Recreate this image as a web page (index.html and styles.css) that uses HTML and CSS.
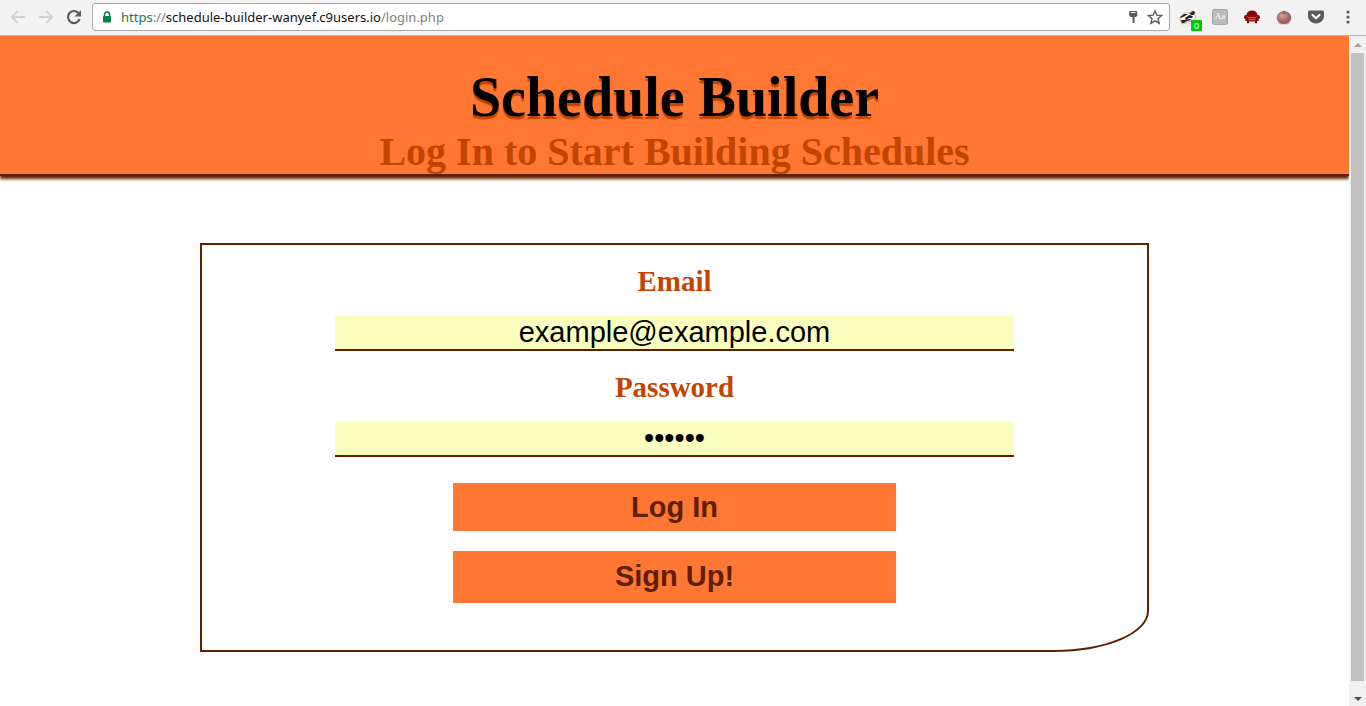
FILE: index.html
```html
<!DOCTYPE html>
<html lang="en">
<head>
<meta charset="utf-8">
<title>Schedule Builder</title>
<link rel="stylesheet" href="styles.css">
</head>
<body>
<div class="toolbar">
  <div class="nav">
    <button class="nav-btn" type="button" aria-label="Back"><svg width="16" height="16" viewBox="0 0 16 16"><path d="M15 8H2M8 2L2 8l6 6" fill="none" stroke="#d0d0d0" stroke-width="2"/></svg></button>
    <button class="nav-btn" type="button" aria-label="Forward"><svg width="16" height="16" viewBox="0 0 16 16"><path d="M1 8h13M8 2l6 6-6 6" fill="none" stroke="#d0d0d0" stroke-width="2"/></svg></button>
    <button class="nav-btn" type="button" aria-label="Reload"><svg width="16" height="16" viewBox="0 0 16 16"><path d="M13.6 10.2A6 6 0 1 1 12.4 3.9" fill="none" stroke="#5a5a5a" stroke-width="2.2"/><path d="M15 1v6.500H8.500z" fill="#5a5a5a"/></svg></button>
  </div>
  <div class="omnibox">
    <svg width="10" height="12" viewBox="0 0 10 12"><path d="M2.500 5V3.500a2.500 2.500 0 0 1 5 0V5" fill="none" stroke="#0b8043" stroke-width="1.500"/><rect x="1" y="5" width="8" height="6.500" rx=".6" fill="#0b8043"/></svg>
    <div class="url"><span class="scheme">https</span><span class="muted">://</span>schedule-builder-wanyef.c9users.io<span class="muted">/login.php</span></div>
    <button class="box-btn" type="button" aria-label="Saved passwords"><svg width="16" height="16" viewBox="0 0 16 16"><path d="M5 2h6.500L12.300 3v3.500L11 8H9.500v6h-2V8H5.500L4.200 6.500V3z" fill="#5a5a5a"/><path d="M6 3.500h4.500" stroke="#fff" stroke-width="1"/></svg></button>
    <button class="box-btn" type="button" aria-label="Bookmark"><svg width="16" height="16" viewBox="0 0 16 16"><path d="M8 1.800l1.800 4.400 4.800.4-3.600 3.100 1.100 4.700L8 11.900l-4.100 2.500L5 9.700 1.400 6.600l4.800-.4z" fill="none" stroke="#5a5a5a" stroke-width="1.400"/></svg></button>
  </div>
  <div class="extensions">
    <button class="ext" type="button" aria-label="Tracker blocker"><svg width="18" height="16" viewBox="0 0 18 16"><path d="M1 9l3-3 1-2 2 0 3 0 3-2 3 1 0 4 1 2-2 3-4 0-4 2-4 1-1-2z" fill="#fff" stroke="#f2a36a" stroke-width="1"/><path d="M1 8l4-3 4 0-3 2-4 2zM10 5l4-3 2 1-1 3-2 0zM6 9l4-3 4 1-1 2-3 0-3 2zM2 11l3 0 6-1 2 1-5 1-3 2-2 0z" fill="#252525"/></svg><span class="badge">0</span></button>
    <button class="ext" type="button" aria-label="Font finder"><span class="aa">Aa</span></button>
    <button class="ext" type="button" aria-label="Chair"><svg width="16" height="16" viewBox="0 0 16 16"><path d="M2.500 6Q3 1.500 8 1.500T13.500 6q2.500-.2 2.500 2 0 1.800-1.500 2.200V12H13v2.200h-2V12.500H5v1.700H3V12H1.500v-1.800Q0 9.800 0 8q0-2.200 2.500-2z" fill="#8c0505"/><path d="M3.500 7.500l1 1.200h7l1-1.200M4.500 10.800h7" fill="none" stroke="#d9a0a0" stroke-width=".8"/></svg></button>
    <button class="ext" type="button" aria-label="Pomodoro"><svg width="16" height="16" viewBox="0 0 16 16"><defs><radialGradient id="tomato" cx=".4" cy=".35"><stop offset="0" stop-color="#d9a09b"/><stop offset="1" stop-color="#a0605f"/></radialGradient></defs><ellipse cx="8" cy="14.600" rx="6" ry="1.200" fill="#ccc"/><ellipse cx="8" cy="8.600" rx="7.300" ry="6.500" fill="url(#tomato)"/><path d="M4 3.500l3 .3L8 1l.8 2.600L12 3.500 9 4.800l-1 1-1-1z" fill="#796a62"/></svg></button>
    <button class="ext" type="button" aria-label="Pocket"><svg width="16" height="16" viewBox="0 0 16 16"><path d="M1.500 1.500h13q1.500 0 1.500 1.500v4a8 7.500 0 0 1-16 0V3q0-1.500 1.500-1.500z" fill="#5b5b5b"/><path d="M4.500 6L8 9.300 11.500 6" fill="none" stroke="#fff" stroke-width="2.200" stroke-linecap="round" stroke-linejoin="round"/></svg></button>
    <button class="ext" type="button" aria-label="Menu"><svg width="4" height="14" viewBox="0 0 4 14"><g fill="#5a5a5a"><circle cx="2" cy="2" r="1.600"/><circle cx="2" cy="7" r="1.600"/><circle cx="2" cy="12" r="1.600"/></g></svg></button>
  </div>
</div>
<div class="viewport">
  <div class="page">
    <header class="banner">
      <h1 class="title">Schedule Builder</h1>
      <h2 class="subtitle">Log In to Start Building Schedules</h2>
    </header>
    <main class="main">
      <form class="card">
        <label class="label" for="email">Email</label>
        <input class="field" id="email" type="email" value="example@example.com">
        <label class="label" for="password">Password</label>
        <input class="field" id="password" type="password" value="secret">
        <button class="action login" type="submit">Log In</button>
        <button class="action signup" type="button">Sign Up!</button>
      </form>
    </main>
  </div>
  <div class="scrollbar">
    <svg width="17" height="17" viewBox="0 0 17 17"><path d="M5 11h8L9 7z" fill="#a3a3a3"/></svg>
    <div class="track"><div class="thumb"></div></div>
    <svg width="17" height="17" viewBox="0 0 17 17"><path d="M5 8h8l-4 4z" fill="#505050"/></svg>
  </div>
</div>
</body>
</html>
```

FILE: styles.css
```css
* { box-sizing: border-box; }

body {
  margin: 0;
  height: 100vh;
  display: flex;
  flex-direction: column;
  background: #fff;
  font-family: "Liberation Serif", "Times New Roman", serif;
}

button { border: 0; padding: 0; background: none; }

svg { display: block; flex: none; }

.toolbar {
  display: flex;
  flex: none;
  align-items: center;
  height: 36px;
  padding: 0 2px 2px 4px;
  background: #f2f2f2;
  border-bottom: 1px solid #b6b4b6;
}

.nav { display: flex; margin-right: 4px; }

.nav-btn {
  display: flex;
  align-items: center;
  justify-content: center;
  width: 28px;
  height: 28px;
}

.omnibox {
  display: flex;
  flex: 1;
  align-items: center;
  gap: 6px;
  height: 28px;
  padding: 0 6px 0 9px;
  background: #fff;
  border: 1px solid #a9a9a9;
  border-radius: 3px;
}

.url {
  flex: 1;
  padding-left: 3px;
  font: 13px/18px "Noto Sans", "Open Sans", sans-serif;
  color: #111;
  white-space: nowrap;
}

.scheme { color: #0b8043; }
.muted { color: #808080; }

.box-btn { width: 16px; height: 16px; }

.extensions { display: flex; margin-left: 2px; }

.ext {
  position: relative;
  display: flex;
  align-items: center;
  justify-content: center;
  width: 32px;
  height: 28px;
}

.badge {
  position: absolute;
  right: 2px;
  bottom: 0;
  width: 11px;
  height: 11px;
  background: #00c800;
  border-radius: 1px;
  color: #fff;
  font: 9px/12px "Liberation Sans", Arial, sans-serif;
}

.aa {
  width: 16px;
  height: 16px;
  border: 1px solid #a5a5a5;
  border-radius: 2px;
  background: #bcbcbc;
  color: #fff;
  font: 9px/13px "Liberation Serif", serif;
}

.viewport { display: flex; flex: 1; min-height: 0; }

.page { flex: 1; overflow: hidden; }

.banner {
  padding-top: 29px;
  text-align: center;
  background: #ff7733;
  border-bottom: 2px solid #5e2000;
  box-shadow: 0 3px 3px #5e2000;
}

.title {
  margin: 0;
  font-size: 56px;
  line-height: 64px;
  color: #000;
  text-shadow: 0 3px 1px #c24400;
}

.subtitle {
  margin: 0;
  font-size: 40px;
  line-height: 45px;
  color: #c24400;
}

.main { padding-top: 67px; }

.card {
  display: flex;
  flex-direction: column;
  align-items: center;
  box-sizing: content-box;
  width: 70%;
  margin: 0 auto;
  padding: 20px 0 47px;
  border: 2px solid #5e2000;
  border-bottom-right-radius: 10%;
}

.label {
  font-size: 29px;
  line-height: 33px;
  font-weight: bold;
  color: #c24400;
}

.field {
  width: 72%;
  height: 35px;
  margin: 18px 0 20px;
  padding: 0;
  border: 0;
  border-bottom: 2px solid #5e2000;
  outline: 0;
  background: #faffbd;
  color: #000;
  font: 29px/33px "Liberation Sans", Arial, sans-serif;
  text-align: center;
}

.action {
  width: 47%;
  background: #ff7733;
  color: #5e2000;
  font: bold 29px/33px "Liberation Sans", Arial, sans-serif;
}

.login { height: 48px; margin-top: 6px; }
.signup { height: 52px; margin-top: 20px; padding-bottom: 2px; }

.scrollbar {
  display: flex;
  flex: none;
  flex-direction: column;
  width: 17px;
  background: #f1f1f1;
}

.track { flex: 1; padding: 0 2px 8px; }
.thumb { height: 100%; background: #c1c1c1; }
```
